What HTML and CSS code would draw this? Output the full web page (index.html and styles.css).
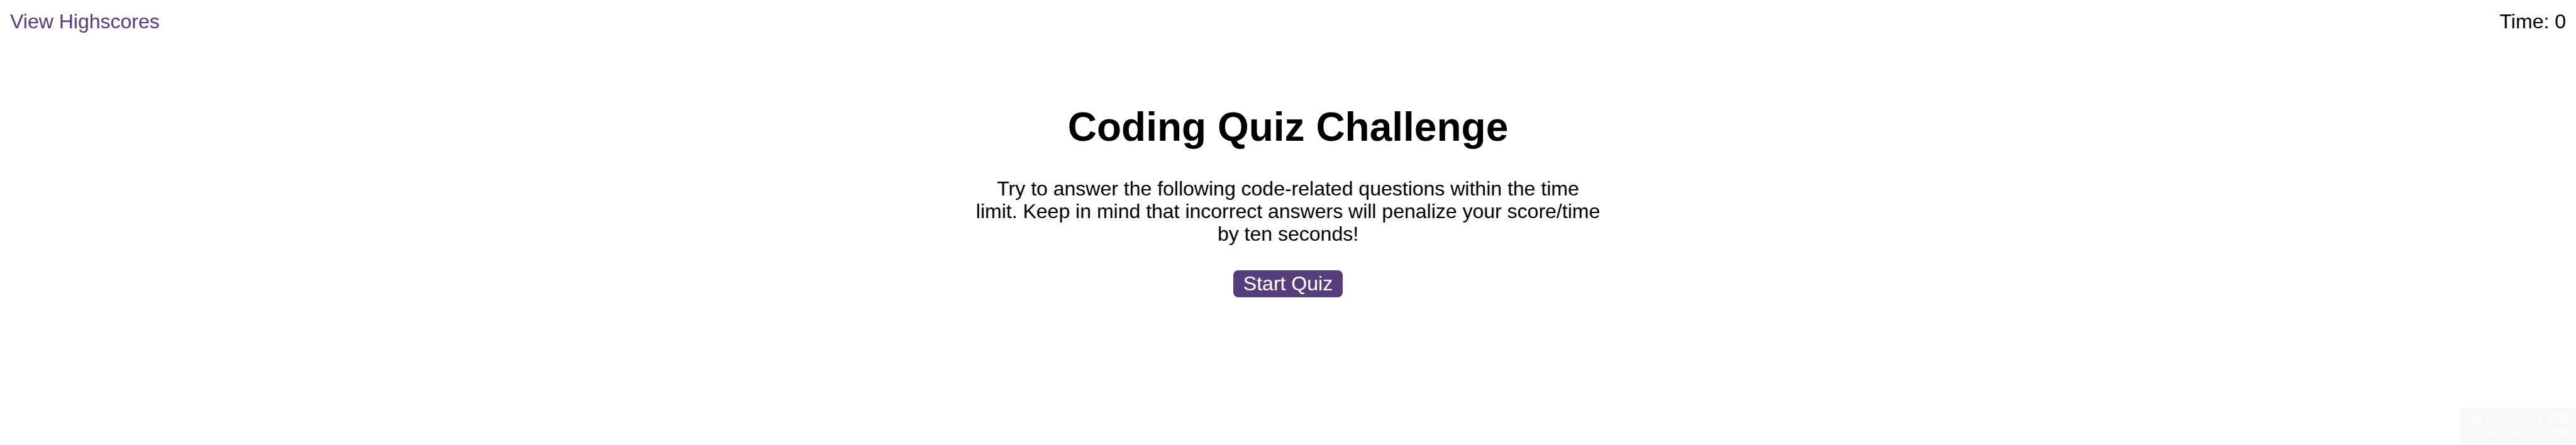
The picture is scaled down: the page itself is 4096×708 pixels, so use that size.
FILE: index.html
```html
<!DOCTYPE html>
<html lang="en">
<head>
<meta charset="utf-8">
<title>Coding Quiz Challenge</title>
<link rel="stylesheet" href="styles.css">
</head>
<body>
<header class="topbar">
  <a class="scores-link" href="#highscores">View Highscores</a>
  <div class="timer">Time: <span>0</span></div>
</header>
<main class="intro">
  <h1 class="title">Coding Quiz Challenge</h1>
  <p class="description">Try to answer the following code-related questions within the time limit. Keep in mind that incorrect answers will penalize your score/time by ten seconds!</p>
  <button class="start" type="button">Start Quiz</button>
</main>
<aside class="window-size">
  <div>Inner: 2477 x 428</div>
  <div>Outer: 2477 x 428</div>
</aside>
</body>
</html>
```

FILE: styles.css
```css
body {
  margin: 0;
  background: #fff;
  color: #000;
  font-family: Arial, "Liberation Sans", sans-serif;
  font-size: 32px;
  line-height: 36px;
}

.topbar {
  display: flex;
  justify-content: space-between;
  padding: 16px 16px 0;
}

.scores-link {
  color: #563d7c;
  text-decoration: none;
}

.intro {
  display: flex;
  flex-direction: column;
  align-items: center;
  padding-top: 114px;
  text-align: center;
}

.title {
  margin: 0 0 44px;
  font-size: 64px;
  line-height: 72px;
}

.description {
  max-width: 1000px;
  margin: 0 0 40px;
}

.start {
  padding: 3px 16px 4px;
  border: 0;
  border-radius: 8px;
  background: #563d7c;
  color: #fff;
  font: inherit;
  cursor: pointer;
}

.window-size {
  position: fixed;
  right: 0;
  bottom: 0;
  padding: 6px 12px 8px;
  border-top-left-radius: 8px;
  background: #f8f8f8;
  color: #fff;
  font-size: 20px;
  line-height: 23px;
  text-align: right;
}
```
